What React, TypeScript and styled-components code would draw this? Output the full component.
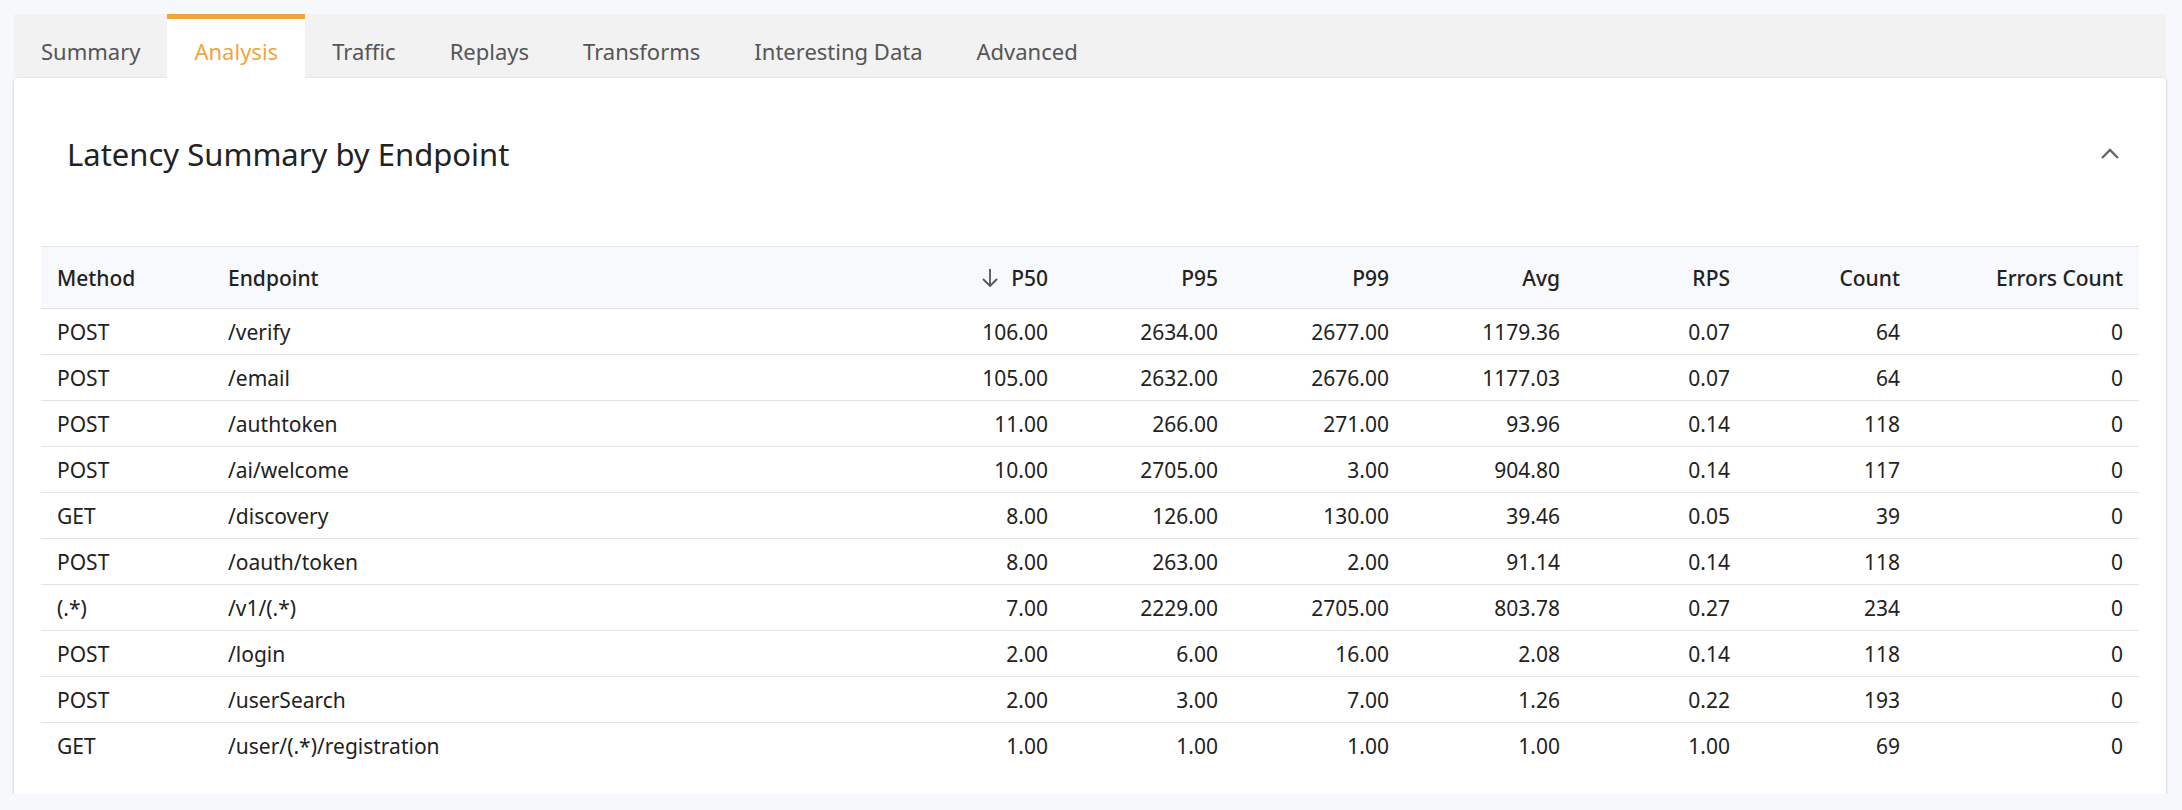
import React from 'react';
import styled, { createGlobalStyle } from 'styled-components';

const Global = createGlobalStyle`
  body { margin: 0; background: #f7f8fc; font-family: "Noto Sans", "Open Sans", sans-serif; color: #1f1f1f; }
`;

const Page = styled.div`
  padding: 14px 16px 0 14px;
`;

const TabBar = styled.div`
  display: flex;
  background: #f2f2f2;
  height: 64px;
`;

const Tab = styled.div<{ $active?: boolean }>`
  display: flex;
  align-items: center;
  padding: 4px 27px 0;
  font-size: 22px;
  color: ${p => (p.$active ? '#f0a53a' : '#555')};
  background: ${p => (p.$active ? '#fff' : 'transparent')};
  border-top: 5px solid ${p => (p.$active ? '#f0a53a' : 'transparent')};
`;

const Card = styled.div`
  background: #fff;
  border-radius: 4px 4px 0 0;
  box-shadow: 0 1px 3px rgba(0,0,0,0.25);
  padding: 0 27px 26px 27px;
`;

const Header = styled.div`
  display: flex;
  align-items: center;
  justify-content: space-between;
  height: 152px;
  padding: 0 18px 16px 26px;
`;

const Title = styled.h2`
  margin: 0;
  font-size: 31px;
  font-weight: 400;
  color: #222;
`;

const Table = styled.table`
  width: 100%;
  border-collapse: collapse;
  font-size: 21px;
  table-layout: fixed;
`;

const Th = styled.th<{ $num?: boolean; $w?: number }>`
  height: 61px;
  background: #f7f9fc;
  border-top: 1px solid #e3e6ec;
  border-bottom: 1px solid #dcdfe4;
  font-weight: 500;
  color: #222;
  text-align: ${p => (p.$num ? 'right' : 'left')};
  padding: 0 16px;
  width: ${p => (p.$w ? `${p.$w - 32}px` : 'auto')};
`;

const Td = styled.td<{ $num?: boolean }>`
  height: 45px;
  border-bottom: 1px solid #e4e4e4;
  text-align: ${p => (p.$num ? 'right' : 'left')};
  padding: 0 16px;
  color: #222;
`;

const LastRow = styled.tr`
  td { border-bottom: none; }
`;

const SortIcon = styled.svg`
  vertical-align: -3px;
  margin-right: 12px;
`;

const tabs = ['Summary', 'Analysis', 'Traffic', 'Replays', 'Transforms', 'Interesting Data', 'Advanced'];

const rows = [
  ['POST', '/verify', '106.00', '2634.00', '2677.00', '1179.36', '0.07', '64', '0'],
  ['POST', '/email', '105.00', '2632.00', '2676.00', '1177.03', '0.07', '64', '0'],
  ['POST', '/authtoken', '11.00', '266.00', '271.00', '93.96', '0.14', '118', '0'],
  ['POST', '/ai/welcome', '10.00', '2705.00', '3.00', '904.80', '0.14', '117', '0'],
  ['GET', '/discovery', '8.00', '126.00', '130.00', '39.46', '0.05', '39', '0'],
  ['POST', '/oauth/token', '8.00', '263.00', '2.00', '91.14', '0.14', '118', '0'],
  ['(.*)', '/v1/(.*)', '7.00', '2229.00', '2705.00', '803.78', '0.27', '234', '0'],
  ['POST', '/login', '2.00', '6.00', '16.00', '2.08', '0.14', '118', '0'],
  ['POST', '/userSearch', '2.00', '3.00', '7.00', '1.26', '0.22', '193', '0'],
  ['GET', '/user/(.*)/registration', '1.00', '1.00', '1.00', '1.00', '1.00', '69', '0'],
];

export default function App() {
  return (
    <Page>
      <Global />
      <TabBar>
        {tabs.map(t => (
          <Tab key={t} $active={t === 'Analysis'}>{t}</Tab>
        ))}
      </TabBar>
      <Card>
        <Header>
          <Title>Latency Summary by Endpoint</Title>
          <svg width="22" height="14" viewBox="0 0 22 14">
            <path d="M3 11 L11 3 L19 11" fill="none" stroke="#666" strokeWidth="2.4" />
          </svg>
        </Header>
        <Table>
          <thead>
            <tr>
              <Th $w={171}>Method</Th>
              <Th>Endpoint</Th>
              <Th $num $w={170}>
                <SortIcon width="18" height="22" viewBox="0 0 18 22">
                  <path d="M9 2 V19 M2 12 L9 19 L16 12" fill="none" stroke="#555" strokeWidth="1.8" />
                </SortIcon>
                P50
              </Th>
              <Th $num $w={170}>P95</Th>
              <Th $num $w={171}>P99</Th>
              <Th $num $w={171}>Avg</Th>
              <Th $num $w={170}>RPS</Th>
              <Th $num $w={170}>Count</Th>
              <Th $num $w={223}>Errors Count</Th>
            </tr>
          </thead>
          <tbody>
            {rows.map((r, i) => {
              const cells = r.map((c, j) => <Td key={j} $num={j > 1}>{c}</Td>);
              return i === rows.length - 1 ? <LastRow key={i}>{cells}</LastRow> : <tr key={i}>{cells}</tr>;
            })}
          </tbody>
        </Table>
      </Card>
    </Page>
  );
}
